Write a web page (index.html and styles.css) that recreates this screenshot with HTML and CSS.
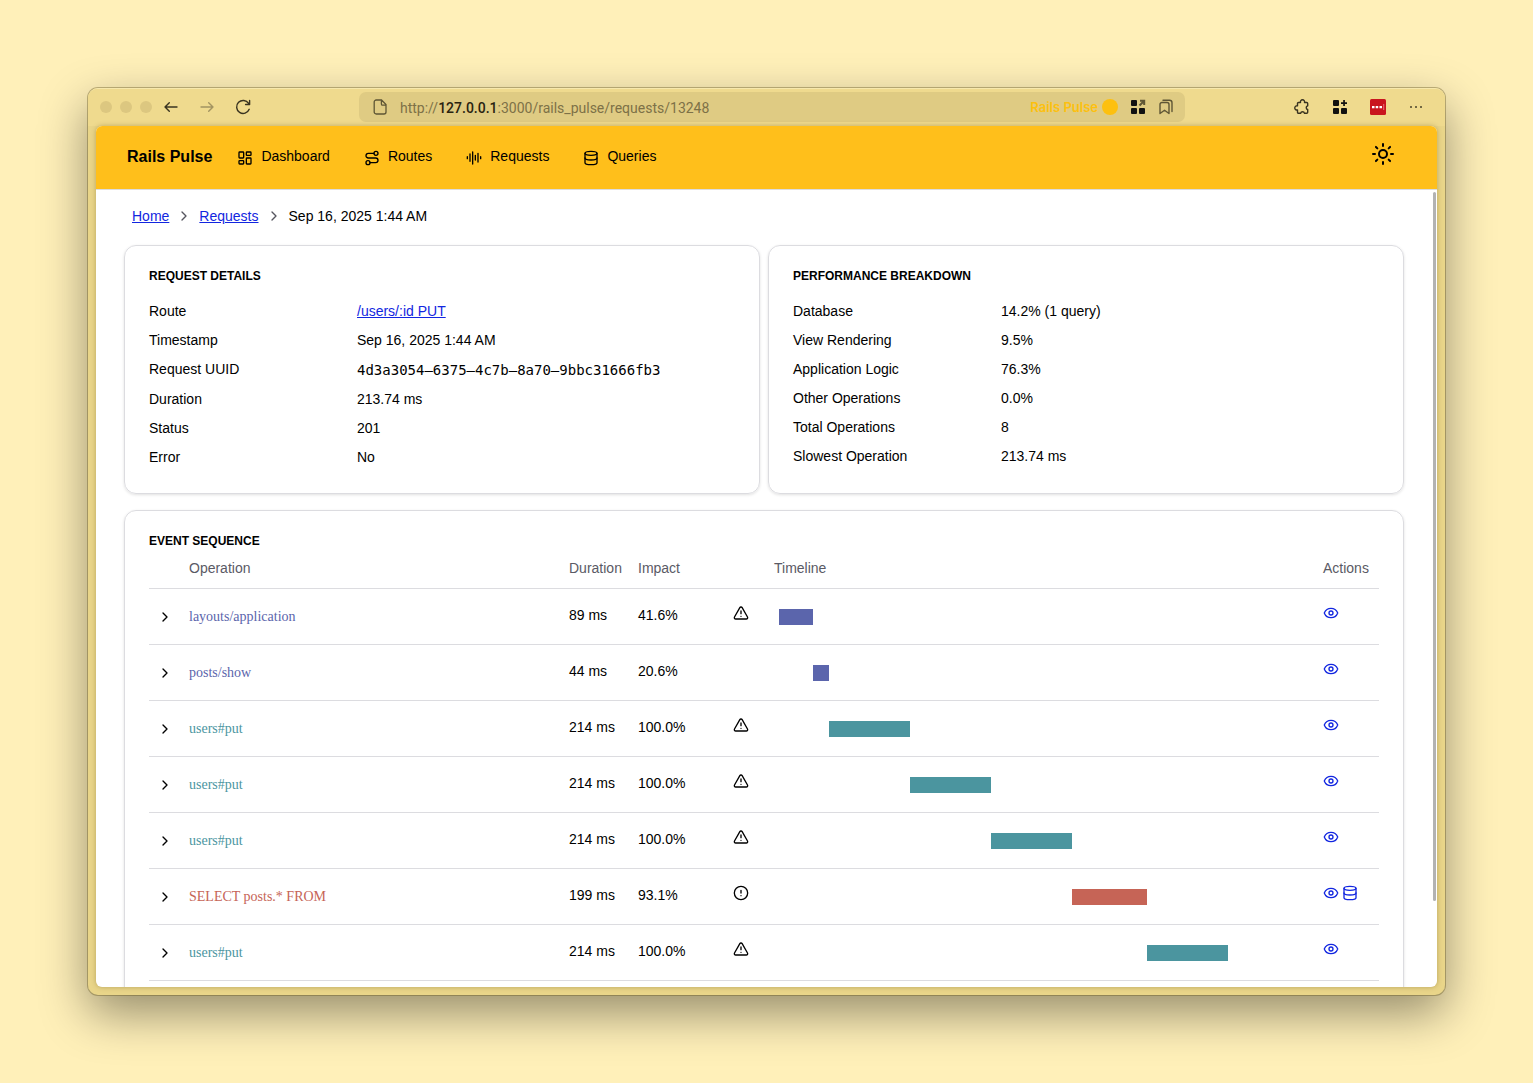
FILE: index.html
```html
<!DOCTYPE html>
<html lang="en">
<head>
<meta charset="utf-8">
<title>Rails Pulse</title>
<link rel="stylesheet" href="styles.css">
</head>
<body>
<svg class="sprite" aria-hidden="true">
  <symbol id="dashboard" viewBox="0 0 24 24"><rect width="7" height="9" x="3" y="3" rx="1"/><rect width="7" height="5" x="14" y="3" rx="1"/><rect width="7" height="9" x="14" y="12" rx="1"/><rect width="7" height="5" x="3" y="16" rx="1"/></symbol>
  <symbol id="route" viewBox="0 0 24 24"><circle cx="6" cy="19" r="3"/><path d="M9 19h8.5a3.5 3.5 0 0 0 0-7h-11a3.5 3.5 0 0 1 0-7H15"/><circle cx="18" cy="5" r="3"/></symbol>
  <symbol id="audio" viewBox="0 0 24 24"><path d="M2 10v3M6 6v11M10 3v18M14 8v7M18 5v13M22 10v3"/></symbol>
  <symbol id="database" viewBox="0 0 24 24"><ellipse cx="12" cy="5" rx="9" ry="3"/><path d="M3 5v14a9 3 0 0 0 18 0V5"/><path d="M3 12a9 3 0 0 0 18 0"/></symbol>
  <symbol id="sun" viewBox="0 0 24 24"><circle cx="12" cy="12" r="4"/><path d="M12 2v2M12 20v2M4.93 4.93l1.41 1.41M17.66 17.66l1.41 1.41M2 12h2M20 12h2M6.34 17.66l-1.41 1.41M19.07 4.93l-1.41 1.41"/></symbol>
  <symbol id="chevron" viewBox="0 0 24 24"><path d="m9 18 6-6-6-6"/></symbol>
  <symbol id="warning" viewBox="0 0 24 24"><path d="m21.73 18-8-14a2 2 0 0 0-3.48 0l-8 14A2 2 0 0 0 4 21h16a2 2 0 0 0 1.73-3"/><path d="M12 9v4M12 17h.01"/></symbol>
  <symbol id="alert" viewBox="0 0 24 24"><circle cx="12" cy="12" r="10"/><path d="M12 8v4M12 16h.01"/></symbol>
  <symbol id="eye" viewBox="0 0 24 24"><path d="M2.06 12.35a1 1 0 0 1 0-.7 10.75 10.75 0 0 1 19.88 0 1 1 0 0 1 0 .7 10.75 10.75 0 0 1-19.88 0"/><circle cx="12" cy="12" r="3"/></symbol>
</svg>

<div class="window">
  <header class="toolbar">
    <div class="toolbar-left">
      <span class="lights"><i></i><i></i><i></i></span>
      <div class="history">
        <button class="tool" aria-label="Back"><svg viewBox="0 0 16 16"><path d="M14 8H2M6.300 3.700 2 8l4.300 4.300"/></svg></button>
        <button class="tool tool-dim" aria-label="Forward" disabled><svg viewBox="0 0 16 16"><path d="M2 8h12M9.700 3.700 14 8l-4.300 4.300"/></svg></button>
        <button class="tool" aria-label="Reload"><svg viewBox="0 0 16 16"><path d="M14.200 10.300A6.500 6.500 0 1 1 13.600 4.400M14.600 1.500V5.500H10.600"/></svg></button>
      </div>
    </div>
    <div class="address">
      <svg class="page-icon" viewBox="0 0 16 16"><path d="M4.200 1h5.300L14 5.500v7.500a2 2 0 0 1-2 2H4.200a2 2 0 0 1-2-2v-10a2 2 0 0 1 2-2ZM9.400 1.200v3.700a1.200 1.200 0 0 0 1.200 1.200h3.200"/></svg>
      <button class="url">http://<b>127.0.0.1</b>:3000/rails_pulse/requests/13248</button>
      <span class="space">Rails Pulse<i></i></span>
      <button class="tool" aria-label="Open in split view"><svg class="solid" viewBox="0 0 16 16"><rect x="1" y="1" width="6" height="6" rx="1"/><rect x="1" y="9" width="6" height="6" rx="1"/><rect x="9" y="9" width="6" height="6" rx="1"/><path class="corner-arrow" d="M9.500 6.500l4.300-4.300M10 1.800h4.200V6"/></svg></button>
      <button class="tool tool-soft" aria-label="Bookmarks"><svg viewBox="0 0 16 16"><path d="M2 5.500a2 2 0 0 1 2-2h5a2 2 0 0 1 2 2v9l-4.500-3.300L2 14.500ZM5 1.300h6.500a2.500 2.500 0 0 1 2.500 2.500V12.500"/></svg></button>
    </div>
    <div class="toolbar-right">
      <button class="tool" aria-label="Extensions"><svg viewBox="0 0 16 16"><path d="M4.500 3.500H6.500a2.100 2.100 0 1 1 4 0h2.200a1 1 0 0 1 1 1v2.300a1.900 1.900 0 0 0 0 3.700v2.800a1 1 0 0 1-1 1h-2.200a2 2 0 0 0-3.900 0H4.500a1 1 0 0 1-1-1v-2.400a2.100 2.100 0 1 1 0-4V4.500a1 1 0 0 1 1-1Z"/></svg></button>
      <button class="tool" aria-label="Add split"><svg class="solid" viewBox="0 0 16 16"><rect x="1" y="1" width="6" height="6" rx="1"/><rect x="1" y="9" width="6" height="6" rx="1"/><rect x="9" y="9" width="6" height="6" rx="1"/><path d="M11.200 1h1.700v2.200H15v1.700h-2.100V7h-1.700V4.900H9V3.200h2.200Z"/></svg></button>
      <button class="tool" aria-label="Password manager"><svg class="solid" viewBox="0 0 16 16"><rect class="red" width="16" height="16" rx="1.500"/><path class="white" d="M2 7h2.500v2.300H2zM5.700 7h2.500v2.300H5.700zM9.500 7H12v2.300H9.500z"/><path class="pink" d="M13.300 5h.9v6h-.9z"/></svg></button>
      <button class="tool" aria-label="More"><svg class="solid dots" viewBox="0 0 16 16"><circle cx="3" cy="8" r="1"/><circle cx="8" cy="8" r="1"/><circle cx="13" cy="8" r="1"/></svg></button>
    </div>
  </header>

  <div class="page">
    <nav class="nav">
      <a class="brand" href="#">Rails Pulse</a>
      <div class="nav-links">
        <a href="#"><svg class="icon"><use href="#dashboard"/></svg>Dashboard</a>
        <a href="#"><svg class="icon"><use href="#route"/></svg>Routes</a>
        <a href="#"><svg class="icon"><use href="#audio"/></svg>Requests</a>
        <a href="#"><svg class="icon"><use href="#database"/></svg>Queries</a>
      </div>
      <button class="theme" aria-label="Toggle theme"><svg class="icon icon-large"><use href="#sun"/></svg></button>
    </nav>

    <div class="scroll">
      <main class="content">
        <div class="crumbs">
          <a href="#">Home</a>
          <svg class="icon"><use href="#chevron"/></svg>
          <a href="#">Requests</a>
          <svg class="icon"><use href="#chevron"/></svg>
          <span>Sep 16, 2025 1:44 AM</span>
        </div>

        <div class="cards">
          <section class="card">
            <h2>REQUEST DETAILS</h2>
            <dl>
              <dt>Route</dt><dd><a href="#">/users/:id PUT</a></dd>
              <dt>Timestamp</dt><dd>Sep 16, 2025 1:44 AM</dd>
              <dt>Request UUID</dt><dd class="mono">4d3a3054–6375–4c7b–8a70–9bbc31666fb3</dd>
              <dt>Duration</dt><dd>213.74 ms</dd>
              <dt>Status</dt><dd>201</dd>
              <dt>Error</dt><dd>No</dd>
            </dl>
          </section>
          <section class="card">
            <h2>PERFORMANCE BREAKDOWN</h2>
            <dl>
              <dt>Database</dt><dd>14.2% (1 query)</dd>
              <dt>View Rendering</dt><dd>9.5%</dd>
              <dt>Application Logic</dt><dd>76.3%</dd>
              <dt>Other Operations</dt><dd>0.0%</dd>
              <dt>Total Operations</dt><dd>8</dd>
              <dt>Slowest Operation</dt><dd>213.74 ms</dd>
            </dl>
          </section>
        </div>

        <section class="card events">
          <h2>EVENT SEQUENCE</h2>
          <table>
            <colgroup><col class="col-toggle"><col class="col-operation"><col class="col-duration"><col class="col-impact"><col class="col-flag"><col><col class="col-actions"></colgroup>
            <thead>
              <tr><th></th><th>Operation</th><th>Duration</th><th>Impact</th><th></th><th>Timeline</th><th>Actions</th></tr>
            </thead>
            <tbody>
              <tr class="view">
                <td><button class="toggle" aria-label="Expand"><svg class="icon"><use href="#chevron"/></svg></button></td>
                <td class="operation">layouts/application</td><td>89 ms</td><td>41.6%</td>
                <td><svg class="icon"><use href="#warning"/></svg></td>
                <td><div class="track"><div class="bar" style="margin-left:0%;width:6.5%"></div></div></td>
                <td><div class="actions"><a href="#" aria-label="View"><svg class="icon"><use href="#eye"/></svg></a></div></td>
              </tr>
              <tr class="view">
                <td><button class="toggle" aria-label="Expand"><svg class="icon"><use href="#chevron"/></svg></button></td>
                <td class="operation">posts/show</td><td>44 ms</td><td>20.6%</td>
                <td></td>
                <td><div class="track"><div class="bar" style="margin-left:6.5%;width:3%"></div></div></td>
                <td><div class="actions"><a href="#" aria-label="View"><svg class="icon"><use href="#eye"/></svg></a></div></td>
              </tr>
              <tr class="controller">
                <td><button class="toggle" aria-label="Expand"><svg class="icon"><use href="#chevron"/></svg></button></td>
                <td class="operation">users#put</td><td>214 ms</td><td>100.0%</td>
                <td><svg class="icon"><use href="#warning"/></svg></td>
                <td><div class="track"><div class="bar" style="margin-left:9.5%;width:15.3%"></div></div></td>
                <td><div class="actions"><a href="#" aria-label="View"><svg class="icon"><use href="#eye"/></svg></a></div></td>
              </tr>
              <tr class="controller">
                <td><button class="toggle" aria-label="Expand"><svg class="icon"><use href="#chevron"/></svg></button></td>
                <td class="operation">users#put</td><td>214 ms</td><td>100.0%</td>
                <td><svg class="icon"><use href="#warning"/></svg></td>
                <td><div class="track"><div class="bar" style="margin-left:24.8%;width:15.3%"></div></div></td>
                <td><div class="actions"><a href="#" aria-label="View"><svg class="icon"><use href="#eye"/></svg></a></div></td>
              </tr>
              <tr class="controller">
                <td><button class="toggle" aria-label="Expand"><svg class="icon"><use href="#chevron"/></svg></button></td>
                <td class="operation">users#put</td><td>214 ms</td><td>100.0%</td>
                <td><svg class="icon"><use href="#warning"/></svg></td>
                <td><div class="track"><div class="bar" style="margin-left:40.1%;width:15.3%"></div></div></td>
                <td><div class="actions"><a href="#" aria-label="View"><svg class="icon"><use href="#eye"/></svg></a></div></td>
              </tr>
              <tr class="sql">
                <td><button class="toggle" aria-label="Expand"><svg class="icon"><use href="#chevron"/></svg></button></td>
                <td class="operation">SELECT posts.* FROM</td><td>199 ms</td><td>93.1%</td>
                <td><svg class="icon"><use href="#alert"/></svg></td>
                <td><div class="track"><div class="bar" style="margin-left:55.5%;width:14.2%"></div></div></td>
                <td><div class="actions"><a href="#" aria-label="View"><svg class="icon"><use href="#eye"/></svg></a><a href="#" aria-label="Query"><svg class="icon"><use href="#database"/></svg></a></div></td>
              </tr>
              <tr class="controller">
                <td><button class="toggle" aria-label="Expand"><svg class="icon"><use href="#chevron"/></svg></button></td>
                <td class="operation">users#put</td><td>214 ms</td><td>100.0%</td>
                <td><svg class="icon"><use href="#warning"/></svg></td>
                <td><div class="track"><div class="bar" style="margin-left:69.7%;width:15.3%"></div></div></td>
                <td><div class="actions"><a href="#" aria-label="View"><svg class="icon"><use href="#eye"/></svg></a></div></td>
              </tr>
            </tbody>
          </table>
        </section>
      </main>
      <div class="scrollbar"></div>
    </div>
  </div>
</div>
</body>
</html>
```
FILE: styles.css
```css
* { box-sizing: border-box; }

body {
  margin: 0;
  height: 100vh;
  padding: 88px;
  background: #fff0b9;
  font: 14px/20px "Liberation Sans", Arial, sans-serif;
  color: #000;
  overflow: hidden;
}

button {
  padding: 0;
  border: 0;
  background: none;
  color: inherit;
  font: inherit;
}

h2, dl, dd { margin: 0; }

.sprite { display: none; }

.icon {
  display: block;
  flex: none;
  width: 16px;
  height: 16px;
  fill: none;
  stroke: currentColor;
  stroke-width: 2;
  stroke-linecap: round;
  stroke-linejoin: round;
}

.icon-large { width: 24px; height: 24px; }

/* Browser window */
.window {
  display: flex;
  flex-direction: column;
  height: 100%;
  padding: 0 8px 8px;
  border-radius: 10px;
  background: #e9d589;
  box-shadow: 0 0 0 1px rgba(100, 85, 30, .4), inset 0 1px #f7e8ac, 0 18px 48px rgba(0, 0, 0, .42);
}

.toolbar {
  display: grid;
  grid-template-columns: 263px 1fr 252px;
  align-items: center;
  flex: none;
  height: 37px;
  margin: 1px -8px 0;
  padding: 0 8px 2px;
  border-radius: 9px 9px 0 0;
  background: #efda8e;
}

.toolbar-left,
.toolbar-right,
.history,
.lights { display: flex; align-items: center; }

.toolbar-left { padding-left: 4px; gap: 11px; }
.lights { gap: 8px; }
.lights i { width: 12px; height: 12px; border-radius: 50%; background: #dcc780; }
.history { gap: 20px; }
.toolbar-right { justify-content: flex-end; gap: 22px; padding-right: 13px; }

.tool { flex: none; color: #3a3420; }
.tool svg {
  display: block;
  width: 16px;
  height: 16px;
  fill: none;
  stroke: currentColor;
  stroke-width: 1.4;
  stroke-linecap: round;
  stroke-linejoin: round;
}
.tool-dim { color: #a39461; }
.tool-soft { color: #5f5635; }
.tool .solid { fill: #111; stroke: none; }
.tool .dots { fill: #4a432a; }
.tool .corner-arrow { fill: none; stroke: #5f5635; stroke-width: 2; stroke-linecap: butt; stroke-linejoin: miter; }
.tool .red { fill: #c9151e; }
.tool .white { fill: #fff; }
.tool .pink { fill: #ef7f85; }

.address {
  display: flex;
  align-items: center;
  gap: 12px;
  height: 30px;
  padding: 0 11px 0 13px;
  border-radius: 7px;
  background: #dfcb83;
}

.page-icon { flex: none; width: 16px; height: 16px; fill: none; stroke: #5f5635; stroke-width: 1.3; }
.url {
  flex: 1;
  padding-top: 2px;
  text-align: left;
  font-family: Roboto, sans-serif;
  font-size: 14px;
  color: #7d7147;
}
.url b { font-weight: 500; color: #292310; }
.space {
  display: flex;
  align-items: center;
  gap: 4px;
  font-family: Inter, sans-serif;
  font-size: 13px;
  font-weight: 600;
  color: #fdc00f;
}
.space i { width: 16px; height: 16px; border-radius: 50%; background: #fdc00f; }

/* Page */
.page {
  display: flex;
  flex-direction: column;
  flex: 1;
  min-height: 0;
  border-radius: 6px;
  background: #fff;
  box-shadow: 0 0 5px rgba(90, 70, 10, .35);
  overflow: hidden;
}

.nav {
  display: flex;
  align-items: center;
  flex: none;
  height: 64px;
  padding: 0 42px 2px 31px;
  border-bottom: 1px solid #dcdce0;
  background: #ffbf1b;
}

.nav a { color: #000; text-decoration: none; }
.brand { font-size: 16px; font-weight: 700; }
.nav-links { display: flex; flex: 1; gap: 34px; margin-left: 25px; padding-bottom: 2px; }
.nav-links a { display: flex; gap: 8px; }
.nav-links .icon { margin-top: 4px; }
.theme { padding-bottom: 6px; }

.scroll { position: relative; flex: 1; min-height: 0; overflow: hidden; }
.scrollbar {
  position: absolute;
  top: 2px;
  right: 1px;
  width: 3px;
  height: 89%;
  border-radius: 2px;
  background: #b3b3b3;
}

.content { padding: 16px 33px 16px 28px; }
.content a { color: #1226e0; }

.crumbs { display: flex; align-items: center; gap: 7px; padding-left: 8px; margin-bottom: 19px; }
.crumbs .icon { color: #55555f; }

.cards { display: grid; grid-template-columns: 1fr 1fr; gap: 8px; }

.card {
  padding: 24px 24px 25px;
  border: 1px solid #dcdce0;
  border-radius: 12px;
  box-shadow: 0 1px 3px rgba(0, 0, 0, .12);
}

.card h2 { font-size: 12px; line-height: 12px; font-weight: 700; }

dl {
  display: grid;
  grid-template-columns: 208px 1fr;
  gap: 8px 0;
  margin-top: 19px;
  line-height: 21px;
}

.mono { font-family: "DejaVu Sans Mono", monospace; line-height: 22px; }

/* Event table */
.events { margin-top: 16px; }

table { width: 100%; table-layout: fixed; border-collapse: separate; border-spacing: 0; }
.col-toggle { width: 32px; }
.col-operation { width: 380px; }
.col-duration { width: 69px; }
.col-impact { width: 95px; }
.col-flag { width: 41px; }
.col-actions { width: 64px; }

th {
  padding: 11px 8px 10px;
  border-bottom: 1px solid #dcdce0;
  font-weight: 400;
  text-align: left;
  color: #5a5a65;
}

td {
  height: 56px;
  padding: 16px 8px 15px;
  border-bottom: 1px solid #dcdce0;
  vertical-align: top;
}

td:last-child, th:last-child { padding-right: 0; }

.toggle { display: flex; align-items: center; height: 24px; }
.operation { font-family: "Liberation Serif", "Times New Roman", serif; line-height: 24px; }
.track { display: flex; align-items: center; height: 24px; margin-left: 5px; }
.bar { height: 16px; }
.actions { display: flex; gap: 3px; }

.view .operation { color: #5b65ac; }
.view .bar { background: #5b65ac; }
.controller .operation { color: #4b959f; }
.controller .bar { background: #4b959f; }
.sql .operation { color: #c66456; }
.sql .bar { background: #c66456; }
```
